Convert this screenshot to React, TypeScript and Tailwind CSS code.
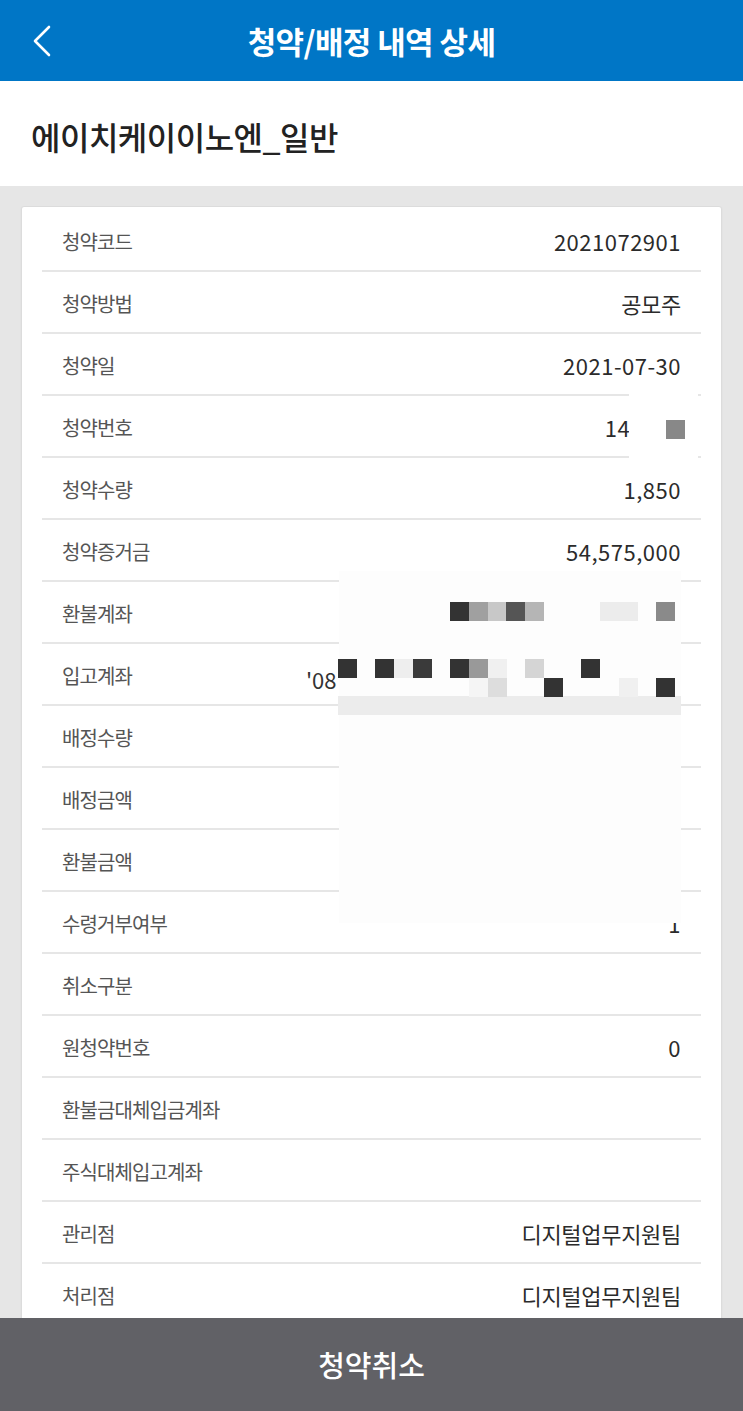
import React from "react";

const rows: { label: string; value?: string }[] = [
  { label: "청약코드", value: "2021072901" },
  { label: "청약방법", value: "공모주" },
  { label: "청약일", value: "2021-07-30" },
  { label: "청약번호", value: "144000" },
  { label: "청약수량", value: "1,850" },
  { label: "청약증거금", value: "54,575,000" },
  { label: "환불계좌" },
  { label: "입고계좌" },
  { label: "배정수량" },
  { label: "배정금액" },
  { label: "환불금액" },
  { label: "수령거부여부", value: "1" },
  { label: "취소구분" },
  { label: "원청약번호", value: "0" },
  { label: "환불금대체입금계좌" },
  { label: "주식대체입고계좌" },
  { label: "관리점", value: "디지털업무지원팀" },
  { label: "처리점", value: "디지털업무지원팀" },
];

// pixelated masking blocks, relative to the card
const blocks: [number, number, string, number?][] = [
  [428, 395, "#333333"],
  [447, 395, "#a0a0a0"],
  [466, 395, "#c8c8c8"],
  [484, 395, "#555555"],
  [503, 395, "#b5b5b5"],
  [578, 395, "#ececec", 38],
  [634, 395, "#8a8a8a"],
  [316, 452, "#333333"],
  [353, 452, "#333333"],
  [372, 452, "#eeeeee"],
  [391, 452, "#3a3a3a"],
  [428, 452, "#333333"],
  [447, 452, "#999999"],
  [466, 452, "#f0f0f0"],
  [503, 452, "#d5d5d5"],
  [559, 452, "#333333"],
  [447, 471, "#f5f5f5"],
  [466, 471, "#dddddd"],
  [522, 471, "#333333"],
  [597, 471, "#f0f0f0"],
  [634, 471, "#333333"],
];

const isNum = (v: string) => /^[0-9,\-]+$/.test(v);

export default function App() {
  return (
    <div
      className="flex h-[1411px] w-[743px] flex-col overflow-hidden bg-[#e6e6e6]"
      style={{ fontFamily: '"Noto Sans CJK KR", "Noto Sans", sans-serif' }}
    >
      <header className="relative flex h-[81px] shrink-0 items-center justify-center bg-[#0076c6]">
        <svg
          className="absolute left-[30px] top-[24px]"
          width="24"
          height="34"
          viewBox="0 0 24 34"
          fill="none"
          stroke="white"
          strokeWidth="2.6"
          strokeLinecap="round"
          strokeLinejoin="round"
        >
          <path d="M19 3 L5 17 L19 31" />
        </svg>
        <h1 className="pt-[2px] text-[31px] font-bold tracking-[-0.6px] text-white">청약/배정 내역 상세</h1>
      </header>

      <div className="flex h-[105px] shrink-0 items-center bg-white pl-[31px]">
        <h2 className="pt-[4px] text-[32px] font-medium tracking-[-0.5px] text-[#222]">에이치케이이노엔_일반</h2>
      </div>

      <div className="min-h-0 flex-1 overflow-hidden px-[21px] pt-[20px]">
        <div className="relative rounded-[3px] border border-[#dcdcdc] bg-white px-[20px] pt-[3px] shadow-[0_1px_2px_rgba(0,0,0,0.06)]">
          {rows.map((r) => (
            <div
              key={r.label}
              className="flex h-[62px] items-center justify-between border-b-2 border-[#e6e6e6] px-[20px] pt-[3px]"
            >
              <span className="text-[20px] tracking-[-0.9px] text-[#555]">{r.label}</span>
              {r.value && (
                <span
                  className={
                    isNum(r.value)
                      ? "text-[22px] tracking-[0.5px] text-[#2b2b2b]"
                      : "text-[22px] tracking-[-0.3px] text-[#2b2b2b]"
                  }
                >
                  {r.value}
                </span>
              )}
            </div>
          ))}

          {/* masked areas */}
          <span className="absolute left-[284px] top-[457px] text-[22px] leading-[30px] text-[#333]">'08</span>
          <div className="absolute left-[607px] top-[186px] h-[70px] w-[69px] bg-white" />
          <div className="absolute left-[644px] top-[213px] h-[19px] w-[19px] bg-[#888]" />
          <div className="absolute left-[317px] top-[364px] h-[352px] w-[342px] bg-[#fdfdfd]" />
          <div className="absolute left-[316px] top-[489px] h-[19px] w-[343px] bg-[#ececec]" />
          {blocks.map(([x, y, c, w]) => (
            <div
              key={`${x}-${y}`}
              className="absolute h-[19px]"
              style={{ left: x, top: y, width: w ?? 19, background: c }}
            />
          ))}
        </div>
      </div>

      <button className="flex h-[93px] shrink-0 items-center justify-center bg-[#616166] text-[29px] font-medium text-white">
        청약취소
      </button>
    </div>
  );
}
